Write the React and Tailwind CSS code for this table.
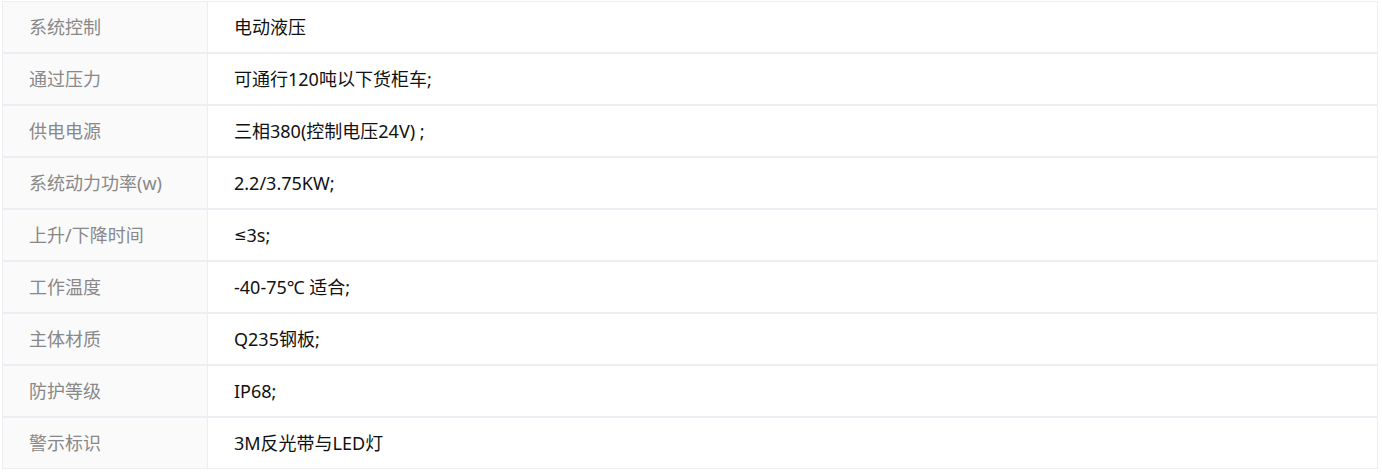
const specs = [
  ['系统控制', '电动液压'],
  ['通过压力', '可通行120吨以下货柜车;'],
  ['供电电源', '三相380(控制电压24V) ;'],
  ['系统动力功率(w)', '2.2/3.75KW;'],
  ['上升/下降时间', <><span style={{ fontFamily: '"DejaVu Sans", sans-serif' }} className="text-[15px]">≤</span>3s;</>],
  ['工作温度', '-40-75℃ 适合;'],
  ['主体材质', 'Q235钢板;'],
  ['防护等级', 'IP68;'],
  ['警示标识', '3M反光带与LED灯'],
];

export default function App() {
  return (
    <div className="w-[1382px] h-[475px] bg-white pt-px pl-[2px]" style={{ fontFamily: '"Noto Sans", "Noto Sans CJK SC", sans-serif' }}>
      <div className="w-[1376px] border border-[#eceef3]">
        {specs.map(([label, value], i) => (
          <div
            key={label}
            className={i > 0 ? 'flex h-[52px] border-t-2 border-[#eceef3]' : 'flex h-[50px]'}
          >
            <div className="w-[205px] shrink-0 flex items-center pl-[26px] bg-[#fafafa] border-r border-[#eceef3] text-[18px] text-[#888]">
              {label}
            </div>
            <div className="flex-1 flex items-center pl-[26px] text-[18px] text-[#111]">
              {value}
            </div>
          </div>
        ))}
      </div>
    </div>
  );
}
